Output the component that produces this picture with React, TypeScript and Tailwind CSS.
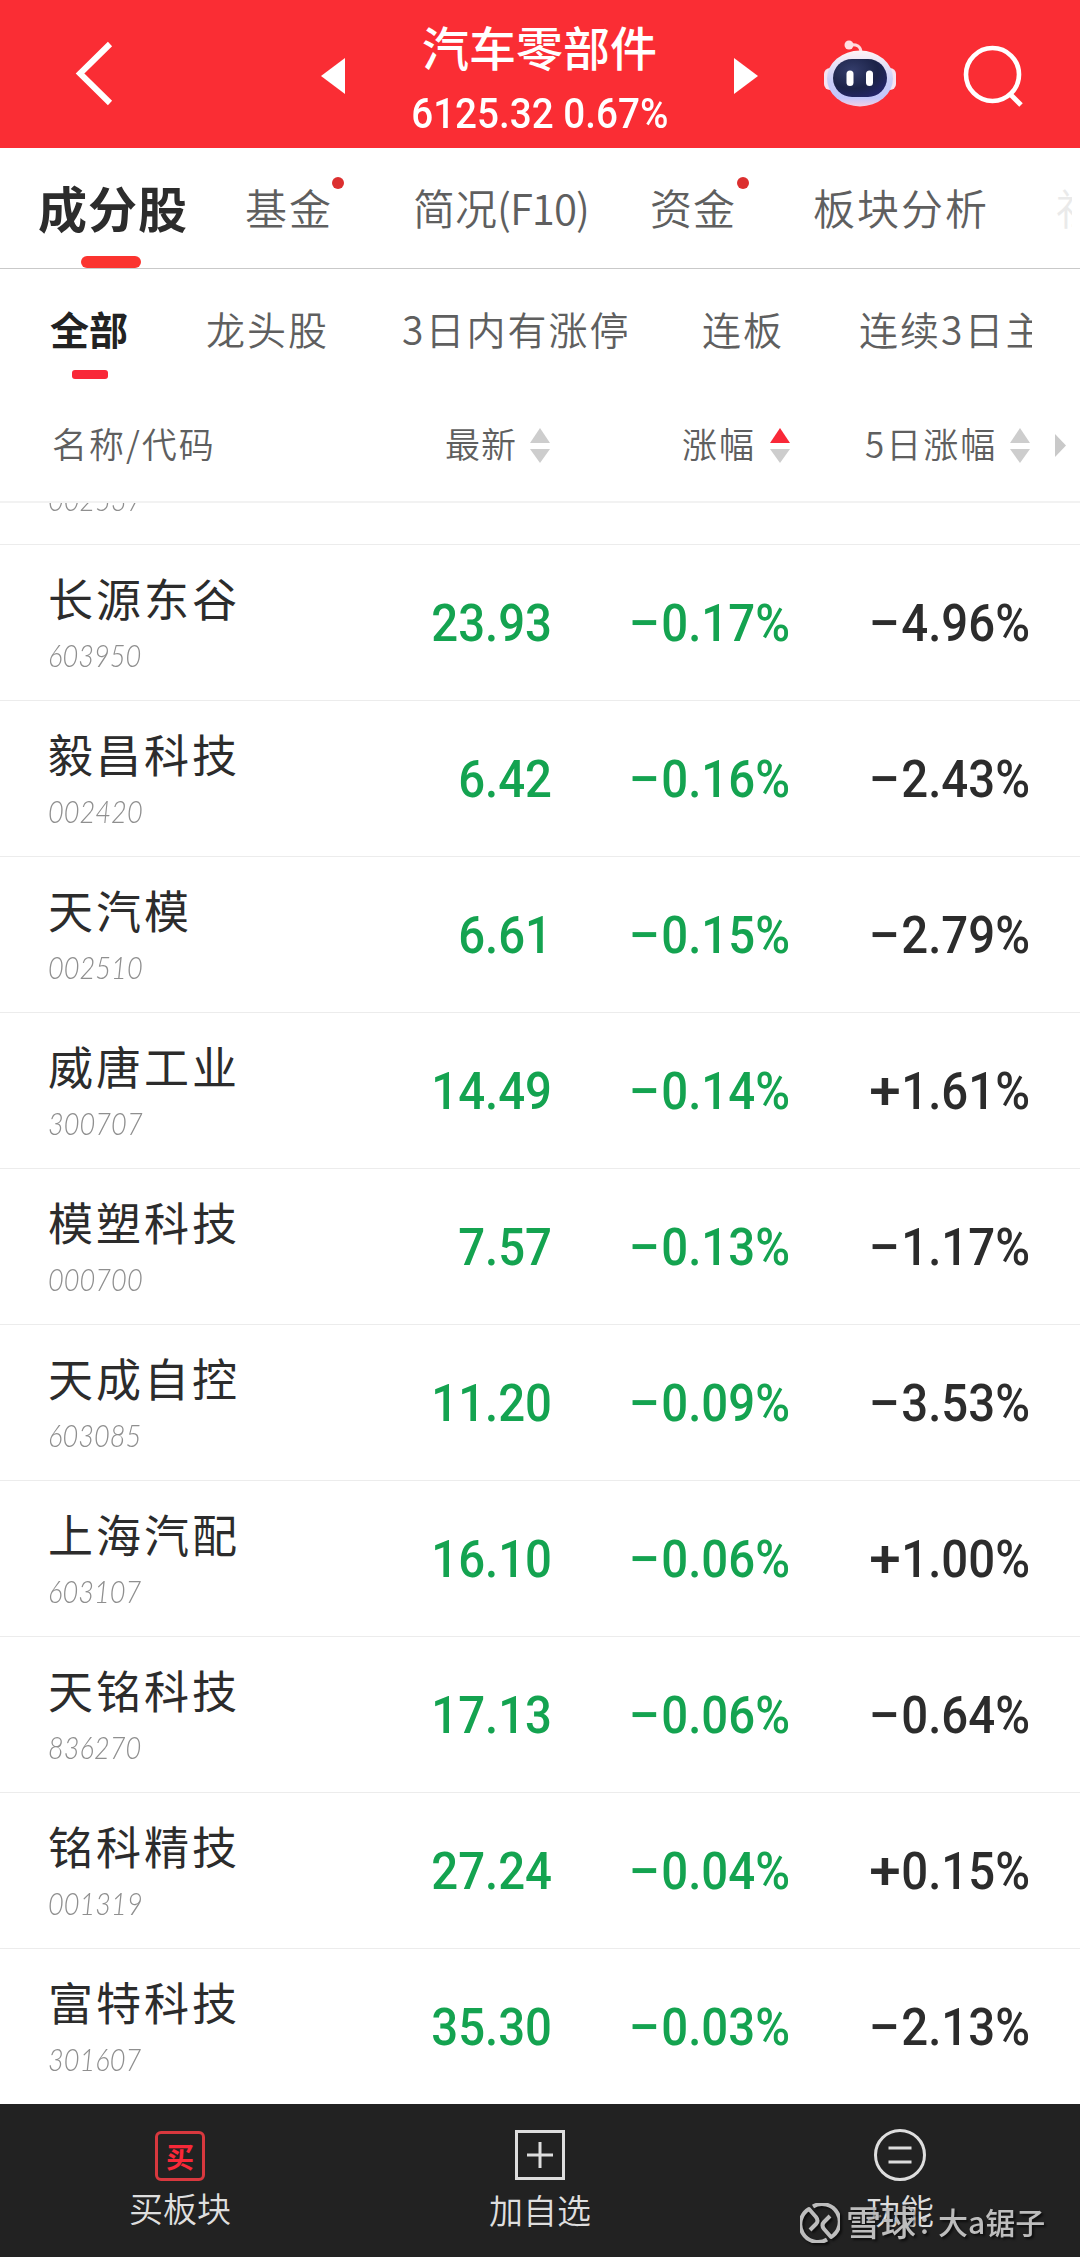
import clsx from "clsx"

const stocks = [
  { name: "长源东谷", code: "603950", price: "23.93", change: "−0.17%", fiveDay: "−4.96%" },
  { name: "毅昌科技", code: "002420", price: "6.42", change: "−0.16%", fiveDay: "−2.43%" },
  { name: "天汽模", code: "002510", price: "6.61", change: "−0.15%", fiveDay: "−2.79%" },
  { name: "威唐工业", code: "300707", price: "14.49", change: "−0.14%", fiveDay: "+1.61%" },
  { name: "模塑科技", code: "000700", price: "7.57", change: "−0.13%", fiveDay: "−1.17%" },
  { name: "天成自控", code: "603085", price: "11.20", change: "−0.09%", fiveDay: "−3.53%" },
  { name: "上海汽配", code: "603107", price: "16.10", change: "−0.06%", fiveDay: "+1.00%" },
  { name: "天铭科技", code: "836270", price: "17.13", change: "−0.06%", fiveDay: "−0.64%" },
  { name: "铭科精技", code: "001319", price: "27.24", change: "−0.04%", fiveDay: "+0.15%" },
  { name: "富特科技", code: "301607", price: "35.30", change: "−0.03%", fiveDay: "−2.13%" },
]

export default function App() {
  return (
    <div className="flex h-[2257px] w-[1080px] flex-col overflow-hidden bg-white font-['Noto_Sans_CJK_SC',sans-serif] text-[#2c2c2c]">
      <Header />
      <Tabs />
      <SubTabs />
      <ColumnHead />
      <StockList />
      <BottomBar />
    </div>
  )
}

const Header = () => (
  <header className="flex h-[148px] shrink-0 items-start bg-[#fa2d34] text-white">
    <svg className="mt-[38px] ml-[72px] h-[72px] w-[46px]" viewBox="0 0 46 72" fill="none" stroke="currentColor" strokeWidth="6">
      <path d="M38 6 8 35.500 38 65" />
    </svg>
    <svg className="mt-[58px] ml-[203px] h-9 w-6" viewBox="0 0 24 36" fill="currentColor">
      <path d="M24 0v36L0 18z" />
    </svg>
    <div className="flex w-[389px] flex-col items-center">
      <h1 className="mt-[15px] text-[47px] leading-[62px] font-medium whitespace-nowrap">汽车零部件</h1>
      <div className="mt-[5px] scale-x-[0.92] font-[Roboto,sans-serif] text-[42px] leading-[64px] font-medium whitespace-nowrap">
        6125.32 0.67%
      </div>
    </div>
    <svg className="mt-[58px] h-9 w-6" viewBox="0 0 24 36" fill="currentColor">
      <path d="M0 0v36l24-18z" />
    </svg>
    <Robot />
    <svg className="mt-[44px] ml-[63px] h-[64px] w-[64px]" viewBox="0 0 64 64" fill="none" stroke="currentColor" strokeWidth="4.600">
      <circle cx="31.500" cy="30.500" r="26.500" />
      <path d="m49 50 11 11" strokeWidth="5" />
    </svg>
  </header>
)

const Robot = () => (
  <svg className="mt-[38px] ml-[64px] h-[72px] w-[76px]" viewBox="0 0 76 72">
    <defs>
      <linearGradient id="shell" x1="0" y1="0" x2="0" y2="1">
        <stop offset="0" stopColor="#fff4f6" />
        <stop offset="0.550" stopColor="#c9cdf8" />
        <stop offset="0.850" stopColor="#c3c6fa" />
        <stop offset="1" stopColor="#f6cfe2" />
      </linearGradient>
      <radialGradient id="visor" cx="0.350" cy="0.300" r="0.800">
        <stop offset="0" stopColor="#343d6b" />
        <stop offset="0.600" stopColor="#1c2348" />
        <stop offset="1" stopColor="#25256b" />
      </radialGradient>
    </defs>
    <path d="M27 7c8-1 12 1 12 8" fill="none" stroke="#ffd9dd" strokeWidth="3" />
    <circle cx="27" cy="7" r="4.500" fill="#ffdfe3" />
    <rect x="2" y="30" width="12" height="22" rx="6" fill="#f6e3f2" />
    <rect x="62" y="30" width="12" height="22" rx="6" fill="#f6e3f2" />
    <ellipse cx="38" cy="40.500" rx="33" ry="28" fill="url(#shell)" />
    <rect x="11" y="21" width="54" height="38" rx="19" fill="url(#visor)" />
    <rect x="24.500" y="32.500" width="7" height="15.500" rx="3.500" fill="#fff" />
    <rect x="44" y="32.500" width="7" height="15.500" rx="3.500" fill="#fff" />
  </svg>
)

const Tabs = () => (
  <nav className="flex h-[121px] shrink-0 overflow-hidden border-b border-[#c9c9c9] text-[42px] leading-[118px] font-[350] whitespace-nowrap text-[#5f5f5f]">
    <div className="relative ml-[38px] w-[207px] shrink-0 text-[49px] font-bold tracking-[1px] text-[#2c2c2c]">
      成分股
      <span className="absolute bottom-0 left-[43px] h-3 w-[60px] rounded-full bg-[#fb342f]" />
    </div>
    <div className="relative w-[168px] shrink-0 tracking-[2px]">
      基金
      <RedDot />
    </div>
    <div className="w-[237px] shrink-0">
      简况<span className="tracking-[-1px]">(F10)</span>
    </div>
    <div className="relative w-[163px] shrink-0 tracking-[1px]">
      资金
      <RedDot />
    </div>
    <div className="w-[243px] shrink-0 tracking-[2px]">板块分析</div>
    <div className="w-4 overflow-hidden text-[#eaeaea]">社</div>
  </nav>
)

const RedDot = () => <span className="absolute top-[29px] left-[87px] h-3 w-3 rounded-full bg-[#dc2f2f]" />

const SubTabs = () => (
  <nav className="flex h-[121px] w-[1032px] shrink-0 overflow-hidden text-[39px] leading-[118px] font-[350] tracking-[2px] whitespace-nowrap text-[#5f5f5f]">
    <div className="relative ml-[50px] w-[156px] shrink-0 font-bold tracking-normal text-[#222]">
      全部
      <span className="absolute top-[101px] left-[22px] h-[9px] w-9 rounded-[3px] bg-[#f92838]" />
    </div>
    <div className="w-[196px] shrink-0">龙头股</div>
    <div className="w-[300px] shrink-0">3日内有涨停</div>
    <div className="w-[157px] shrink-0">连板</div>
    <div className="shrink-0">连续3日主</div>
  </nav>
)

const ColumnHead = () => (
  <div className="flex h-[113px] shrink-0 items-center border-b-2 border-[#f2f2f2] text-[35px] font-[350] whitespace-nowrap text-[#5f5f5f]">
    <div className="-mt-1 ml-[52px] w-[393px] tracking-[2px]">名称/代码</div>
    <div className="flex w-[237px] items-center gap-[13px]">
      <span className="-mt-1 tracking-[1px]">最新</span>
      <SortIcon />
    </div>
    <div className="flex w-[183px] items-center gap-[14px]">
      <span className="-mt-1 tracking-[2px]">涨幅</span>
      <SortIcon active />
    </div>
    <div className="flex w-[190px] items-center gap-[13px]">
      <span className="-mt-1 tracking-[2px]">5日涨幅</span>
      <SortIcon />
    </div>
    <svg className="h-[23px] w-[11px]" viewBox="0 0 11 23" fill="#c9c9c9">
      <path d="M0 0v23l11-11.500z" />
    </svg>
  </div>
)

const SortIcon = ({ active = false }: { active?: boolean }) => (
  <svg className="h-[35px] w-5" viewBox="0 0 20 35" fill="#cdcdcd">
    <path d="M10 0l10 15H0z" className={clsx(active && "fill-[#f92838]")} />
    <path d="M0 21h20L10 35z" />
  </svg>
)

const StockList = () => (
  <main className="flex h-[1601px] shrink-0 flex-col">
    {/* row scrolled under the column head */}
    <div className="flex h-[42px] shrink-0 items-end overflow-hidden border-b border-[#ececec] pb-[24px] pl-[48px]">
      <Code value="002537" />
    </div>
    {stocks.map((stock) => (
      <div key={stock.code} className="flex h-[156px] shrink-0 items-center border-b border-[#ececec] pl-[48px]">
        <div className="h-full w-[252px] pt-[20px]">
          <div className="h-[66px] text-[45px] leading-[66px] font-normal tracking-[3px] whitespace-nowrap">{stock.name}</div>
          <div className="mt-[3px]">
            <Code value={stock.code} />
          </div>
        </div>
        <Figure value={stock.price} className="w-[252px] text-[#14a350]" />
        <Figure value={stock.change} className="w-[238px] text-[#14a350]" />
        <Figure value={stock.fiveDay} className="w-[240px]" />
      </div>
    ))}
  </main>
)

const Code = ({ value }: { value: string }) => (
  <div className="h-[42px] w-fit origin-left scale-x-[0.850] font-[Lato,sans-serif] text-[32px] leading-[42px] font-light text-[#8f8f8f] italic">
    {value}
  </div>
)

const Figure = ({ value, className }: { value: string; className: string }) => {
  const signed = /^[+−]/.test(value)
  return (
    <div
      className={clsx(
        "mt-[3px] origin-right scale-x-[0.910] text-right font-[Roboto,sans-serif] text-[52px] leading-none font-medium whitespace-nowrap",
        className
      )}
    >
      {signed && <span className="mr-[1px] inline-block origin-right scale-x-[1.2]">{value[0]}</span>}
      {signed ? value.slice(1) : value}
    </div>
  )
}

const BottomBar = () => (
  <footer className="relative grid h-[153px] shrink-0 grid-cols-3 bg-[#222] text-[34px] leading-[50px] font-[350] text-[#dedede]">
    <div className="flex flex-col items-center pt-[27px]">
      <div className="flex h-[50px] w-[50px] items-center justify-center rounded-md border-[3px] border-[#d8383e] text-[28px] leading-none font-bold text-[#f92838]">
        买
      </div>
      <span className="mt-[2px]">买板块</span>
    </div>
    <div className="flex flex-col items-center pt-[26px]">
      <svg className="h-[50px] w-[50px]" viewBox="0 0 50 50" fill="none" stroke="currentColor" strokeWidth="3">
        <path d="M1.500 1.500h47v47h-47zM25 12v26M12 25h26" />
      </svg>
      <span className="mt-[5px]">加自选</span>
    </div>
    <div className="flex flex-col items-center pt-[25px]">
      <svg className="h-[52px] w-[52px]" viewBox="0 0 52 52" fill="none" stroke="currentColor" strokeWidth="3">
        <circle cx="26" cy="26" r="24.500" />
        <path d="M14.500 19h23M14.500 33h23" />
      </svg>
      <span className="mt-[4px]">功能</span>
    </div>
    <Watermark />
  </footer>
)

const Watermark = () => (
  <div className="absolute top-[95px] left-[800px] flex items-center text-[30px] leading-[44px] font-medium whitespace-nowrap text-[#bdbdbd] drop-shadow-[2px_2px_1px_rgba(0,0,0,0.6)]">
    <svg className="mt-[3px] h-10 w-10" viewBox="0 0 40 40" fill="none" stroke="currentColor" strokeWidth="4" strokeLinejoin="round">
      <path d="M13 3.500A17.500 17.500 0 0 1 31 34l-7-8q-3-4 0-7l6-6" />
      <path d="M27 36.500A17.500 17.500 0 0 1 9 6l7 8q3 4 0 7l-6 6" />
    </svg>
    <span className="ml-[6px] text-[35px]">雪球</span>
    <span className="w-[22px] pl-[4px]">:</span>
    <span>大a锯子</span>
  </div>
)
